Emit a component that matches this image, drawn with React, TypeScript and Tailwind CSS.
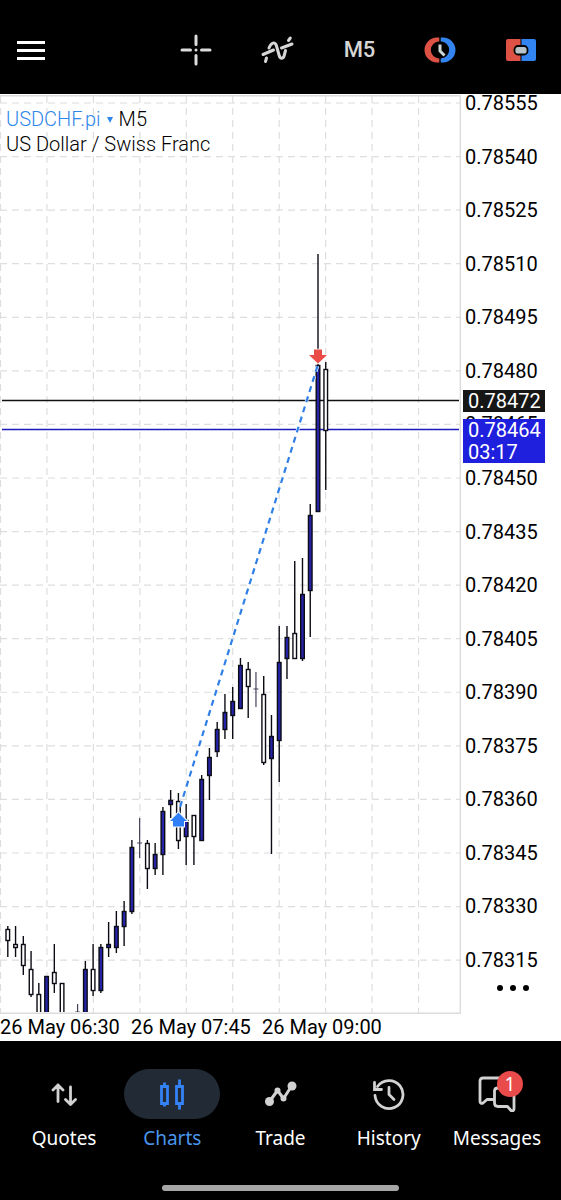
import React from 'react';

type Candle = [high: number, top: number, bottom: number, low: number, up: 0 | 1];

const CANDLES: (Candle | null)[] = [
  [926, 929, 941, 957, 0],
  [926, 944, 948, 957, 0],
  [936, 944, 966, 975, 0],
  [951, 969, 995, 997, 0],
  [983, 994, 1024, 1024, 0],
  [976, 976, 1024, 1024, 1],
  [944, 972, 984, 993, 0],
  [983, 983, 1024, 1024, 0],
  null,
  [1004, 1012, 1012, 1012, 0],
  [961, 969, 1024, 1024, 1],
  [944, 969, 991, 996, 0],
  [944, 947, 991, 993, 1],
  [922, 944, 948, 957, 1],
  [911, 926, 948, 953, 1],
  [901, 911, 927, 946, 1],
  [840, 847, 912, 914, 1],
  [818, 843, 843, 858, 0],
  [840, 843, 869, 889, 0],
  [843, 854, 869, 875, 1],
  [807, 811, 855, 875, 1],
  [790, 800, 805, 818, 1],
  [793, 801, 841, 849, 0],
  [804, 820, 837, 865, 1],
  [815, 815, 837, 865, 0],
  [775, 779, 841, 841, 1],
  [748, 757, 776, 800, 1],
  [722, 729, 752, 757, 1],
  [694, 712, 730, 739, 1],
  [687, 701, 716, 739, 1],
  [658, 665, 709, 709, 1],
  [662, 669, 687, 718, 0],
  [672, 689, 689, 707, 0],
  [676, 694, 763, 765, 0],
  [715, 736, 759, 854, 1],
  [626, 662, 741, 782, 1],
  [626, 637, 659, 679, 1],
  [561, 633, 659, 659, 0],
  [558, 594, 659, 661, 1],
  [504, 515, 591, 637, 1],
  [254, 365, 512, 512, 1],
  [362, 369, 431, 490, 0],
];

const PRICES = [
  '0.78555', '0.78540', '0.78525', '0.78510', '0.78495', '0.78480', '0.78465', '0.78450', '0.78435',
  '0.78420', '0.78405', '0.78390', '0.78375', '0.78360', '0.78345', '0.78330', '0.78315',
];

const TIMES = ['26 May 06:30', '26 May 07:45', '26 May 09:00'];

const rowY = (i: number) => 103 + i * 53.57;
const colX = (i: number) => 0.5 + i * 46.45;
const candleX = (i: number) => 7.8 + i * 7.755;

const CandleMark = ({ candle, x }: { candle: Candle; x: number }) => {
  const [high, top, bottom, low, up] = candle;
  if (top === bottom) {
    return <path d={`M${x} ${high}V${low}M${x - 2.5} ${top}h5`} stroke="#45425c" strokeWidth="1.2" />;
  }
  return (
    <g stroke="#0b0b14" strokeWidth="1.4">
      <path d={`M${x} ${high}V${low}`} />
      <rect x={x - 1.8} y={top + 0.5} width="3.6" height={bottom - top - 1} fill={up ? '#2523a8' : '#fff'} />
    </g>
  );
};

const PriceChart = () => (
  <svg viewBox="0 94 462 921" className="block w-full" fill="none" role="img" aria-label="USDCHF.pi five minute candles">
    <defs>
      <clipPath id="plot">
        <rect x="0" y="95" width="460" height="917" />
      </clipPath>
    </defs>
    <g stroke="#dedede" strokeWidth="1.2" strokeDasharray="7 5">
      {PRICES.map((price, i) => <path key={price} d={`M0 ${rowY(i)}H460`} />)}
      {Array.from({ length: 10 }, (_, i) => <path key={i} d={`M${colX(i)} 96V1013`} />)}
    </g>
    <path d="M0 95.7H460.3V1013.3H0" stroke="#dcdcdc" strokeWidth="1.4" />
    <path d="M2 400.5H459" stroke="#111" strokeWidth="1.3" />
    <path d="M2 429.5H459" stroke="#1c1ab8" strokeWidth="1.5" />
    <g clipPath="url(#plot)">
      {CANDLES.map((candle, i) => candle && <CandleMark key={i} candle={candle} x={candleX(i)} />)}
    </g>
    <path d="M317.5 366L178.5 812" stroke="#fff" strokeWidth="3.4" strokeDasharray="6 4.6" />
    <path d="M317.5 366L178.5 812" stroke="#2f7fe6" strokeWidth="2.2" strokeDasharray="6 4.6" />
    <path d="M314 349.5h8v5.500h5L318 363.500 309 355h5z" fill="#ea4b47" stroke="#fff" strokeWidth="1.6" paintOrder="stroke" />
    <path d="M178.500 812.500l8.500 8.500h-3v5.500h-11v-5.500h-3z" fill="#2f80f7" stroke="#fff" strokeWidth="2" paintOrder="stroke" />
  </svg>
);

const CrosshairIcon = () => (
  <svg width="32" height="32" viewBox="0 0 32 32" stroke="#dcdcdc" strokeWidth="3" strokeLinecap="round">
    <path d="M16 2v8.500M16 21.500V30M2 16h8.500M21.500 16H30" />
    <circle cx="16" cy="16" r="1.500" fill="#dcdcdc" stroke="none" />
  </svg>
);

const IndicatorIcon = () => (
  <svg width="34" height="30" viewBox="0 0 34 30" fill="none" stroke="#d6d6d6" strokeWidth="3" strokeLinecap="round">
    <path d="M4.500 26.500l1-3.500M8 13C10 7.500 14 6 15.500 11l2.700 9.500c1 3.500 4 3.500 5 0l1.300-5M27.500 5.500l1.800-2.500" />
    <path d="M2 19.500l10.500-4.500M20.500 13l10.500-4" />
  </svg>
);

const ClockIcon = () => (
  <svg width="32" height="28" viewBox="0 0 32 28" fill="none">
    <path d="M15.300 1.500H13A12.500 12.500 0 0 0 13 26.500H15.300V22.500A8.500 8.500 0 0 1 15.300 5.500z" fill="#dd5245" />
    <path d="M16.700 1.500H19A12.500 12.500 0 0 1 19 26.500H16.700V22.500A8.500 8.500 0 0 0 16.700 5.500z" fill="#3284f0" />
    <path d="M16 8.500v6.500l4.500 4.500" stroke="#cfd6d8" strokeWidth="3" />
  </svg>
);

const OneClickIcon = () => (
  <svg width="32" height="24" viewBox="0 0 32 24">
    <path d="M3 1h12.500v22H3a2 2 0 0 1-2-2V3a2 2 0 0 1 2-2z" fill="#dd5245" />
    <path d="M16.500 1H29a2 2 0 0 1 2 2v18a2 2 0 0 1-2 2H16.500z" fill="#3284f0" />
    <rect x="9.500" y="8" width="13" height="8.500" rx="3.500" fill="#b9c4c8" stroke="#000" strokeWidth="1.800" />
  </svg>
);

const QuotesIcon = () => (
  <svg width="28" height="24" viewBox="0 0 28 24" fill="none" stroke="#d2d2d2" strokeWidth="2.800" strokeLinecap="round" strokeLinejoin="round">
    <path d="M8 19.500V3M3 8l5-5 5 5M20.500 5v17M15.500 17.500l5 5 5-5" />
  </svg>
);

const ChartsIcon = () => (
  <svg width="28" height="32" viewBox="0 0 28 32" fill="none" stroke="#3382f6" strokeWidth="2.800">
    <path d="M3.500 8.500h6v17h-6zM6.500 4.500v4M6.500 25.500v3M18.500 8.500h6v17h-6zM21.500 1.500v7M21.500 25.500v6" />
  </svg>
);

const TradeIcon = () => (
  <svg width="32" height="28" viewBox="0 0 32 28" stroke="#d2d2d2" strokeWidth="3" fill="none" strokeLinejoin="round">
    <path d="M4.500 21.500l8-11 6 8 8.500-13" />
    <g fill="#d2d2d2" stroke="none">
      <circle cx="4.500" cy="21.500" r="4.500" />
      <circle cx="12.500" cy="10.500" r="3" />
      <circle cx="18.500" cy="18.500" r="3" />
      <circle cx="27" cy="6" r="4.500" />
    </g>
  </svg>
);

const HistoryIcon = () => (
  <svg width="34" height="34" viewBox="0 0 34 34" fill="none" stroke="#d2d2d2" strokeWidth="2.800" strokeLinecap="round">
    <path d="M3 18.500A14 14 0 1 0 5.500 9.500M2.500 5.500v7h7" />
    <path d="M17 10.500v7l5 5" />
  </svg>
);

const MessagesIcon = () => (
  <svg width="38" height="36" viewBox="0 0 38 36" fill="none" stroke="#d2d2d2" strokeWidth="2.800" strokeLinejoin="round">
    <path d="M16 23.500H9l-4 3.500c-1.500 1-3 0-3-1.500V5q0-3 3-3h22q3 0 3 3v7" />
    <path d="M20 12h13q3 0 3 3v18c0 1.500-1.500 2.500-3 1.500l-3.500-4H20q-3.500 0-3.500-3.500V15q0-3 3.500-3z" />
  </svg>
);

const TABS = [
  { name: 'Quotes', icon: <QuotesIcon /> },
  { name: 'Charts', icon: <ChartsIcon />, active: true },
  { name: 'Trade', icon: <TradeIcon /> },
  { name: 'History', icon: <HistoryIcon /> },
  { name: 'Messages', icon: <MessagesIcon />, badge: 1 },
];

const Toolbar = () => (
  <header className="flex h-[94px] items-center justify-between bg-black pl-4 pr-6 pt-[6px]">
    <button aria-label="Menu" className="flex w-8 flex-col gap-[5px] px-px">
      <span className="h-[3px] w-7 bg-white" />
      <span className="h-[3px] w-7 bg-white" />
      <span className="h-[3px] w-7 bg-white" />
    </button>
    <div className="flex w-[357px] items-center justify-between">
      <button aria-label="Crosshair"><CrosshairIcon /></button>
      <button aria-label="Indicators"><IndicatorIcon /></button>
      <button className="text-[22px] leading-7 font-medium text-[#d6d6d6]">M5</button>
      <button aria-label="Pending order"><ClockIcon /></button>
      <button aria-label="One click trading"><OneClickIcon /></button>
    </div>
  </header>
);

const App: React.FC = () => (
  <div className="bg-black font-['Roboto',sans-serif]">
    <Toolbar />
    <main className="bg-white text-black">
      <div className="flex">
        <div className="relative min-w-0 flex-1">
          <PriceChart />
          <div className="absolute left-[6px] top-[13px] text-[20px] leading-[25px] font-light text-black">
            <div className="flex items-center gap-[6px]">
              <button className="flex items-center gap-[6px] text-[#2f86ea]">
                USDCHF.pi
                <svg width="6" height="6" viewBox="0 0 6 6"><path d="M0 0h6L3 6z" fill="currentColor" /></svg>
              </button>
              <span>M5</span>
            </div>
            <p>US Dollar / Swiss Franc</p>
          </div>
        </div>
        <div className="relative flex w-[99px] shrink-0 flex-col justify-between pb-[46px] pl-[3px] text-[20px] leading-[18px]">
          {PRICES.map((price) => <span key={price}>{price}</span>)}
          <div className="absolute left-px top-[296px] flex w-[82px] flex-col gap-[7px] leading-[22px] text-white">
            <span className="bg-[#161616] pl-[5px]">0.78472</span>
            <span className="bg-[#1f1fde] pl-[5px]">0.78464<br />03:17</span>
          </div>
          <button aria-label="More" className="absolute bottom-[24px] left-[35px] flex gap-[7px]">
            <span className="size-[6px] rounded-full bg-black" />
            <span className="size-[6px] rounded-full bg-black" />
            <span className="size-[6px] rounded-full bg-black" />
          </button>
        </div>
      </div>
      <div className="flex h-[26px] gap-[11px] text-[20px] leading-6">
        {TIMES.map((time) => <span key={time} className="w-[120px] whitespace-nowrap">{time}</span>)}
      </div>
    </main>
    <nav className="flex h-[159px] flex-col justify-between px-[10px] pb-[9px] pt-7">
      <div className="flex justify-between">
        {TABS.map(({ name, icon, active, badge }) => (
          <button
            key={name}
            className={`flex flex-1 flex-col items-center gap-[7px] font-['Noto_Sans',sans-serif] text-[19px] leading-6 ${active ? 'text-[#4a95ea]' : 'text-white'}`}
          >
            <span className={`relative flex h-[50px] w-24 items-center justify-center rounded-full ${active ? 'bg-[#222a35]' : ''}`}>
              {icon}
              {badge && (
                <span className="absolute right-[22px] top-[2px] size-[26px] rounded-full bg-[#e94a4a] text-center leading-[26px] text-white">
                  {badge}
                </span>
              )}
            </span>
            {name}
          </button>
        ))}
      </div>
      <div className="mx-auto h-[6px] w-[237px] rounded-full bg-[#a6a6a6]" />
    </nav>
  </div>
);

export default App;
